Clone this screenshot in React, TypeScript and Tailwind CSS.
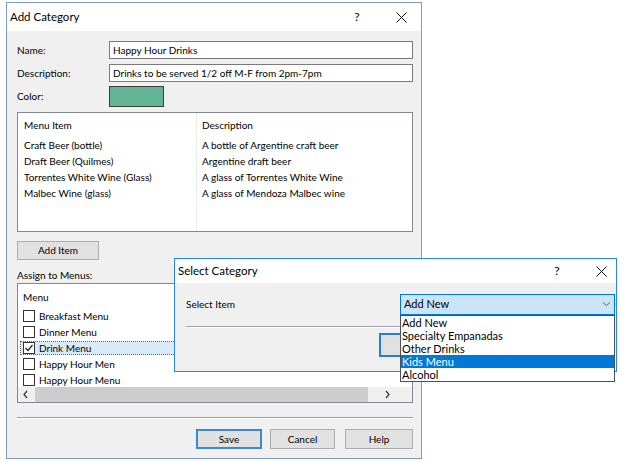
import type { ReactNode } from 'react'

const menuItems = [
  ['Craft Beer (bottle)', 'A bottle of Argentine craft beer'],
  ['Draft Beer (Quilmes)', 'Argentine draft beer'],
  ['Torrentes White Wine (Glass)', 'A glass of Torrentes White Wine'],
  ['Malbec Wine (glass)', 'A glass of Mendoza Malbec wine'],
]

const menus = [
  { name: 'Breakfast Menu', checked: false },
  { name: 'Dinner Menu', checked: false },
  { name: 'Drink Menu', checked: true },
  { name: 'Happy Hour Men', checked: false },
  { name: 'Happy Hour Menu', checked: false },
]

const categories = ['Add New', 'Specialty Empanadas', 'Other Drinks', 'Kids Menu', 'Alcohol']

function CloseIcon() {
  return (
    <svg width="11" height="11" viewBox="0 0 11 11">
      <path d="M0.5 0.5L10.5 10.5M10.5 0.5L0.5 10.5" stroke="#111" strokeWidth="1" />
    </svg>
  )
}

function Button({ children, width, primary }: { children: ReactNode; width: string; primary?: boolean }) {
  return (
    <div
      className={`flex h-[20px] items-center justify-center bg-[#e1e1e1] ${width} ${
        primary ? 'border-2 border-[#3a8ad3]' : 'border border-[#adadad]'
      }`}
    >
      {children}
    </div>
  )
}

function Checkbox({ checked }: { checked: boolean }) {
  return (
    <div className="flex h-[12px] w-[12px] items-center justify-center border border-[#333] bg-white">
      {checked && (
        <svg width="10" height="10" viewBox="0 0 10 10">
          <path d="M1.5 5L4 7.5L8.5 2" fill="none" stroke="#222" strokeWidth="1.2" />
        </svg>
      )}
    </div>
  )
}

function Chevron({ dir }: { dir: 'left' | 'right' | 'down' }) {
  const d = dir === 'left' ? 'M5 1L2 4.5L5 8' : dir === 'right' ? 'M2 1L5 4.5L2 8' : 'M1 2.5L4.5 5.5L8 2.5'
  return (
    <svg width="9" height="9" viewBox="0 0 9 9">
      <path d={d} fill="none" stroke={dir === 'down' ? '#666' : '#333'} strokeWidth={dir === 'down' ? 1 : 1.2} />
    </svg>
  )
}

export default function App() {
  return (
    <div className="relative h-[463px] w-[632px] overflow-hidden bg-white font-[Lato,sans-serif] text-[10px] text-black">
      {/* Add Category dialog */}
      <div className="ml-[6px] mt-[2px] flex h-[457px] w-[416px] flex-col border border-[#7c9cc0] bg-[#f0f0f0]">
        <div className="flex h-[28px] shrink-0 items-center bg-white">
          <span className="flex-1 pl-[3px] text-[11.5px]">Add Category</span>
          <span className="w-[20px] text-center text-[12px]">?</span>
          <span className="ml-[24px] mr-[10px] flex w-[20px] justify-center">
            <CloseIcon />
          </span>
        </div>

        <div className="flex flex-1 flex-col pl-[10px] pr-[8px] pt-[10px]">
          <div className="flex h-[18px] items-center">
            <span className="w-[92px]">Name:</span>
            <div className="flex h-[18px] flex-1 items-center border border-[#7a7a7a] bg-white px-[3px]">
              Happy Hour Drinks
            </div>
          </div>
          <div className="mt-[5px] flex h-[18px] items-center">
            <span className="w-[92px]">Description:</span>
            <div className="flex h-[18px] flex-1 items-center border border-[#7a7a7a] bg-white px-[3px]">
              Drinks to be served 1/2 off M-F from 2pm-7pm
            </div>
          </div>
          <div className="mt-[4px] flex h-[21px] items-center">
            <span className="w-[92px]">Color:</span>
            <div className="h-[21px] w-[55px] border border-[#3c3c3c] bg-[#62b597]" />
          </div>

          <div className="mt-[5px] grid h-[120px] grid-cols-[179px_1fr] border border-[#828790] bg-white">
            <div className="border-r border-[#ececec] pl-[6px] pt-[4px] leading-[16px]">
              <div className="mb-[4px]">Menu Item</div>
              {menuItems.map(([name]) => (
                <div key={name}>{name}</div>
              ))}
            </div>
            <div className="pl-[5px] pt-[4px] leading-[16px]">
              <div className="mb-[4px]">Description</div>
              {menuItems.map(([name, desc]) => (
                <div key={name}>{desc}</div>
              ))}
            </div>
          </div>

          <div className="mt-[9px] flex h-[19px] w-[82px] items-center justify-center border border-[#adadad] bg-[#e1e1e1]">
            Add Item
          </div>

          <div className="mt-[7px] h-[16px] leading-[16px]">Assign to Menus:</div>

          <div className="flex h-[120px] flex-col border border-[#828790] bg-white">
            <div className="flex-1 overflow-hidden pt-[5px] leading-[16px]">
              <div className="mb-[3px] h-[16px] pl-[5px]">Menu</div>
              {menus.map((m) => (
                <div
                  key={m.name}
                  className={`flex items-center ${
                    m.checked
                      ? 'my-[1px] ml-[2px] h-[14px] border border-dotted border-[#6b6b6b] bg-[#d9ebf9] pl-[2px]'
                      : 'h-[16px] pl-[5px]'
                  }`}
                >
                  <Checkbox checked={m.checked} />
                  <span className="ml-[4px]">{m.name}</span>
                </div>
              ))}
            </div>
            <div className="flex h-[15px] shrink-0">
              <div className="flex w-[17px] items-center justify-center bg-[#f0f0f0]">
                <Chevron dir="left" />
              </div>
              <div className="w-[333px] bg-[#cdcdcd]" />
              <div className="flex-1 bg-[#f0f0f0]" />
              <div className="flex w-[16px] items-center justify-center bg-[#f0f0f0]">
                <Chevron dir="right" />
              </div>
              <div className="w-[16px] bg-[#f0f0f0]" />
            </div>
          </div>

          <div className="mt-[14px] h-[2px] border-b border-t border-b-white border-t-[#a0a0a0]" />

          <div className="mt-[10px] flex justify-end">
            <Button width="w-[66px]" primary>
              Save
            </Button>
            <div className="ml-[8px]">
              <Button width="w-[65px]">Cancel</Button>
            </div>
            <div className="ml-[10px]">
              <Button width="w-[68px]">Help</Button>
            </div>
          </div>
        </div>
      </div>

      {/* Select Category dialog */}
      <div className="absolute left-[174px] top-[258px] flex h-[114px] w-[443px] flex-col border border-[#2a87d6] bg-[#f0f0f0]">
        <div className="flex h-[24px] shrink-0 items-center bg-white">
          <span className="flex-1 pl-[3px] text-[11.5px]">Select Category</span>
          <span className="w-[20px] text-center text-[12px]">?</span>
          <span className="ml-[24px] mr-[5px] flex w-[20px] justify-center">
            <CloseIcon />
          </span>
        </div>
        <div className="mt-[11px] flex h-[21px] items-center pl-[11px]">
          <span className="w-[214px]">Select Item</span>
          <div className="flex h-[21px] w-[215px] items-center justify-between border border-[#0078d7] bg-[#cce4f7] pl-[3px] pr-[3px] text-[11px]">
            <span>Add New</span>
            <Chevron dir="down" />
          </div>
        </div>
        <div className="ml-[11px] mr-[10px] mt-[11px] h-[2px] border-b border-t border-b-white border-t-[#a0a0a0]" />
        <div className="ml-[204px] mt-[5px] h-[24px] w-[75px] border-2 border-[#2a7fcc] bg-[#e1e1e1]" />
      </div>

      {/* Dropdown list */}
      <div className="absolute left-[400px] top-[315px] w-[215px] border border-[#4a4f5a] bg-white text-[11px] leading-[13px]">
        {categories.map((c) => (
          <div key={c} className={`pl-[1px] ${c === 'Kids Menu' ? 'bg-[#0078d7] text-white' : ''}`}>
            {c}
          </div>
        ))}
      </div>
    </div>
  )
}
